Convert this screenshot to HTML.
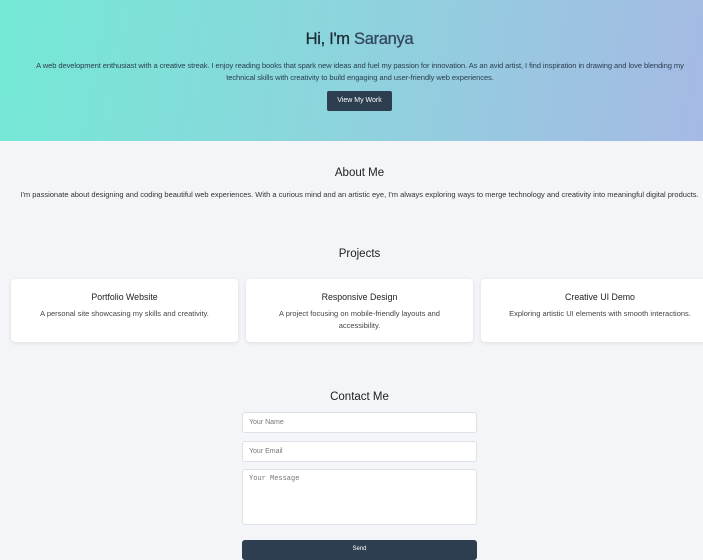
<!DOCTYPE html>
<html><head><meta charset="utf-8"><style>
*{box-sizing:border-box;margin:0;padding:0}
body{width:703px;height:556px;overflow:hidden;background:#f3f5f9;font-family:"Liberation Sans",sans-serif;color:#333;position:relative}
.hero{position:absolute;left:0;top:0;width:703px;height:141px;background:linear-gradient(100deg,#74e9d6 0%,#8bd6dc 45%,#a6b9e5 100%);text-align:center}
.hero h1{position:absolute;top:30px;left:0;width:719px;font-size:16.5px;font-weight:normal;color:#1f2d3a;letter-spacing:-0.3px;-webkit-text-stroke:0.3px #1f2d3a}
.hero p{position:absolute;top:60px;left:28px;width:664px;font-size:7.6px;line-height:11.5px;color:#2c3e50;letter-spacing:-0.1px}
.btn{position:absolute;left:327px;top:91px;width:65px;height:20px;background:#2c3e50;border-radius:2px;color:#fff;font-size:7px;line-height:20px;text-align:center}
.h2{position:absolute;left:0;width:719px;text-align:center;font-size:11.5px;color:#222}
.txt{position:absolute;text-align:center;font-size:7.5px;color:#333;white-space:nowrap}
.card{position:absolute;top:279px;width:227px;height:63px;background:#fff;border-radius:4px;box-shadow:0 1px 4px rgba(0,0,0,0.1);text-align:center}
.card h3{font-size:8.8px;font-weight:normal;color:#222;margin-top:13px}
.card p{font-size:7.5px;color:#444;line-height:12px;margin:6px 22px 0}
.in{position:absolute;left:242px;width:235px;background:#fff;border:1px solid #dde1e6;border-radius:3px;font-size:7px;color:#777;padding:6px}
</style></head><body>
<div class="hero">
<h1>Hi, I'm <span style="color:#34495e;-webkit-text-stroke:0.3px #34495e">Saranya</span></h1>
<p>A web development enthusiast with a creative streak. I enjoy reading books that spark new ideas and fuel my passion for innovation. As an avid artist, I find inspiration in drawing and love blending my technical skills with creativity to build engaging and user-friendly web experiences.</p>
<div class="btn">View My Work</div>
</div>
<div class="h2" style="top:167px">About Me</div>
<div class="txt" style="top:190px;left:20px;width:679px">I'm passionate about designing and coding beautiful web experiences. With a curious mind and an artistic eye, I'm always exploring ways to merge technology and creativity into meaningful digital products.</div>
<div class="h2" style="top:248px">Projects</div>
<div class="card" style="left:11px"><h3>Portfolio Website</h3><p>A personal site showcasing my skills and creativity.</p></div>
<div class="card" style="left:246px"><h3>Responsive Design</h3><p>A project focusing on mobile-friendly layouts and accessibility.</p></div>
<div class="card" style="left:481px;width:238px"><h3>Creative UI Demo</h3><p style="margin:6px 10px 0">Exploring artistic UI elements with smooth interactions.</p></div>
<div class="h2" style="top:391px">Contact Me</div>
<div class="in" style="top:412px;height:21px">Your Name</div>
<div class="in" style="top:441px;height:21px">Your Email</div>
<div class="in" style="top:469px;height:56px;font-family:'Liberation Mono',monospace;padding-top:5px">Your Message</div>
<div style="position:absolute;left:242px;top:540px;width:235px;height:20px;background:#2c3e50;border-radius:3px;color:#fff;font-size:6px;text-align:center;line-height:18px">Send</div>
</body></html>
